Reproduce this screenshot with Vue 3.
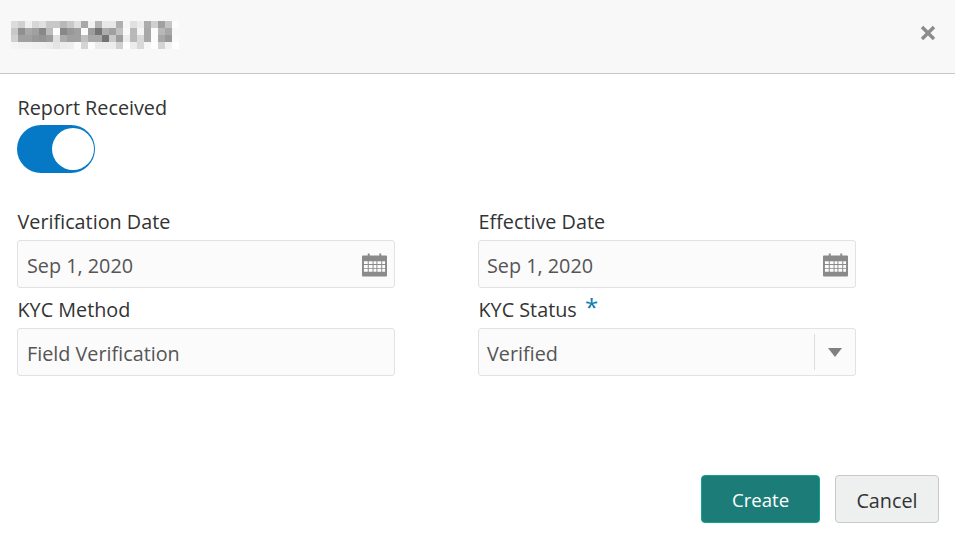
<script setup>
import { ref } from 'vue'

const reportReceived = ref(true)

// blurred customer name, one row of gray values per line
const blurRows = [
  ['dc', 'd0', 'f0', 'd6', 'e0', 'c8', 'c8', 'b8', 'c8', 'e0', 'a8', 'f2', 'b4', 'e8', 'e8', 'b0', 'f6', 'e0', 'ec', 'ac', 'd0', 'a0', 'c4', 'fc'],
  ['c8', '90', 'a8', 'a0', '88', 'bc', 'fc', '88', '98', 'a0', 'fc', '9c', '74', 'ac', 'a0', 'c0', 'f8', 'b8', 'f4', 'a8', 'fc', 'b8', 'a8', 'f8'],
  ['d0', 'a0', 'a0', '98', '94', '9c', 'e0', 'ac', 'a0', 'a0', 'c0', 'a8', 'a8', '74', 'c8', '9c', 'ec', 'b8', 'd8', 'a8', 'fc', 'a8', '98', 'fa'],
  ['f4', 'f2', 'f2', 'f0', 'f0', 'ec', 'e4', 'ec', 'ee', 'fa', 'd4', 'fc', 'ec', 'ec', 'ec', 'd0', 'fe', 'ec', 'd8', 'f6', 'fe', 'd4', 'f2', 'fe']
]
</script>

<template>
  <div class="dialog">
    <div class="dialog-header">
      <div class="blur-title">
        <div v-for="(row, r) in blurRows" :key="r" class="blur-row">
          <span
            v-for="(g, c) in row"
            :key="c"
            class="blur-cell"
            :style="{ backgroundColor: '#' + g + g + g }"
          ></span>
        </div>
      </div>
      <svg class="close-icon" width="16" height="16" viewBox="0 0 16 16">
        <path d="M2 2 L14 14 M14 2 L2 14" stroke="#8c8c8c" stroke-width="3.4" fill="none" />
      </svg>
    </div>

    <div class="dialog-body">
      <label class="field-label">Report Received</label>
      <div class="switch" :class="{ on: reportReceived }" @click="reportReceived = !reportReceived">
        <span class="switch-knob"></span>
      </div>

      <div class="form-grid">
        <div class="form-group">
          <label class="field-label">Verification Date</label>
          <div class="form-control">
            <span>Sep 1, 2020</span>
            <svg class="cal-icon" width="25" height="24" viewBox="0 0 26 24">
              <path fill="#8a8a8a" fill-rule="evenodd" d="M6 0h2v2h10V0h2v2h5a1 1 0 0 1 1 1v20a1 1 0 0 1-1 1H1a1 1 0 0 1-1-1V3a1 1 0 0 1 1-1h5zM2 8v3h4V8zm5 0v3h4V8zm5 0v3h3V8zm4 0v3h4V8zm5 0v3h3V8zM2 12v3h4v-3zm5 0v3h4v-3zm5 0v3h3v-3zm4 0v3h4v-3zm5 0v3h3v-3zM2 16v3h4v-3zm5 0v3h4v-3zm5 0v3h3v-3zm4 0v3h4v-3zm5 0v3h3v-3z" />
            </svg>
          </div>
        </div>
        <div class="form-group">
          <label class="field-label">Effective Date</label>
          <div class="form-control">
            <span>Sep 1, 2020</span>
            <svg class="cal-icon" width="25" height="24" viewBox="0 0 26 24">
              <path fill="#8a8a8a" fill-rule="evenodd" d="M6 0h2v2h10V0h2v2h5a1 1 0 0 1 1 1v20a1 1 0 0 1-1 1H1a1 1 0 0 1-1-1V3a1 1 0 0 1 1-1h5zM2 8v3h4V8zm5 0v3h4V8zm5 0v3h3V8zm4 0v3h4V8zm5 0v3h3V8zM2 12v3h4v-3zm5 0v3h4v-3zm5 0v3h3v-3zm4 0v3h4v-3zm5 0v3h3v-3zM2 16v3h4v-3zm5 0v3h4v-3zm5 0v3h3v-3zm4 0v3h4v-3zm5 0v3h3v-3z" />
            </svg>
          </div>
        </div>
        <div class="form-group">
          <label class="field-label">KYC Method</label>
          <div class="form-control">
            <span>Field Verification</span>
          </div>
        </div>
        <div class="form-group">
          <label class="field-label">KYC Status <span class="required">*</span></label>
          <div class="form-control select">
            <span>Verified</span>
            <div class="select-arrow">
              <span class="arrow-down"></span>
            </div>
          </div>
        </div>
      </div>
    </div>

    <div class="dialog-footer">
      <button class="create-button">Create</button>
      <button class="cancel-button">Cancel</button>
    </div>
  </div>
</template>

<style>
html, body {
  margin: 0;
  background: #fff;
}
</style>

<style scoped>
.dialog {
  width: 955px;
  height: 545px;
  display: flex;
  flex-direction: column;
  font-family: "Open Sans", "Noto Sans", sans-serif;
  font-size: 19.8px;
  color: #333;
  overflow: hidden;
}

.dialog-header {
  height: 70px;
  flex: none;
  display: flex;
  align-items: center;
  justify-content: space-between;
  padding: 0 19px 3px 11px;
  background-color: #f8f8f8;
  border-bottom: 1px solid #c8c8c8;
}

.close-icon {
  margin-top: -5px;
}

.blur-row {
  display: flex;
}

.blur-cell {
  width: 7px;
  height: 7px;
}

.dialog-body {
  padding: 23px 17px 0;
}

.field-label {
  display: block;
  height: 22px;
  line-height: 22px;
  color: #333;
  margin-left: 0.5px;
}

.switch {
  width: 78px;
  height: 48px;
  margin-top: 6px;
  box-sizing: border-box;
  border-radius: 24px;
  background-color: #0679c6;
  display: flex;
  align-items: center;
  justify-content: flex-end;
  padding-right: 1px;
  cursor: pointer;
}

.switch-knob {
  width: 42px;
  height: 42px;
  border-radius: 50%;
  background-color: #fff;
}

.form-grid {
  display: grid;
  grid-template-columns: 378px 378px;
  column-gap: 83px;
  row-gap: 11px;
  margin-top: 38px;
}

.form-group .field-label {
  margin-bottom: 7px;
}

.form-group:nth-child(even) .form-control {
  padding-left: 8px;
}

.form-control {
  height: 48px;
  box-sizing: border-box;
  display: flex;
  align-items: center;
  justify-content: space-between;
  padding: 2px 7px 0 9px;
  background-color: #fbfbfb;
  border: 1px solid #e2e2e2;
  border-radius: 3px;
  color: #555;
}

.cal-icon {
  flex: none;
  margin-top: -1px;
}

.required {
  color: #0a7cb0;
  font-size: 24px;
  line-height: 0;
  margin-left: 3px;
  vertical-align: 1px;
}

.form-control.select {
  padding-right: 0;
}

.select-arrow {
  width: 40px;
  height: 36px;
  margin-top: -2px;
  flex: none;
  display: flex;
  align-items: center;
  justify-content: center;
  border-left: 1px solid #dedede;
}

.arrow-down {
  width: 0;
  height: 0;
  border-left: 7.5px solid transparent;
  border-right: 7.5px solid transparent;
  border-top: 9px solid #808080;
}

.dialog-footer {
  margin-top: auto;
  display: flex;
  justify-content: flex-end;
  gap: 15px;
  padding: 0 16px 22px 0;
}

.create-button,
.cancel-button {
  height: 48px;
  padding: 2px 0 0;
  font-family: inherit;
  font-size: 19.8px;
  border-radius: 4px;
  cursor: pointer;
  box-sizing: border-box;
}

.create-button {
  width: 119px;
  padding-top: 0;
  font-size: 18.6px;
  background-color: #1c7d78;
  border: 1px solid #12a08f;
  color: #fff;
}

.cancel-button {
  width: 104px;
  background-color: #eef0f0;
  border: 1px solid #c8c8c8;
  color: #333;
}
</style>
